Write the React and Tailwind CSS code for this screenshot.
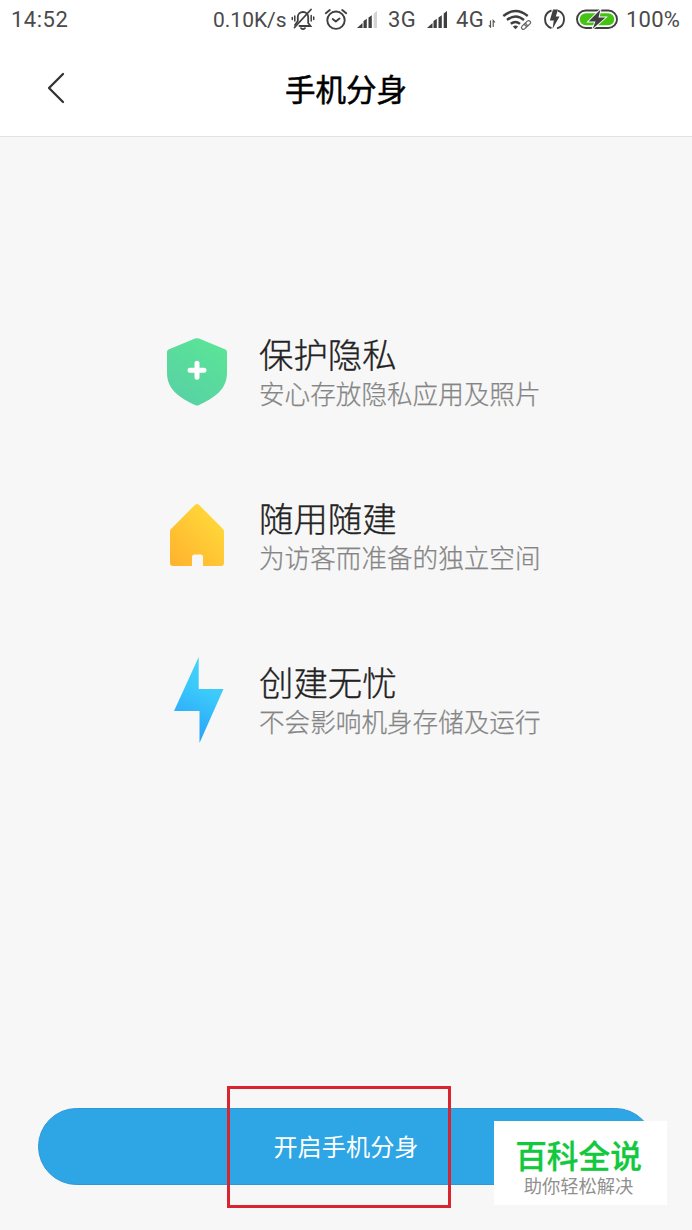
import React from "react";

const CJK = "font-['Noto_Sans_CJK_SC',sans-serif]";

function BellOff() {
  return (
    <svg className="ml-[5px] h-6 w-6 shrink-0" viewBox="0 0 24 24" fill="none" stroke="#3f3f3f" strokeWidth="1.800" strokeLinecap="round">
      <path d="M8.500 18H19.500L17.200 15V9C17.200 6.200 15 4 12 4C9 4 6.800 6.200 6.800 9V13L4 17" />
      <path d="M3.500 19.500L20 1.500M10 20.200Q12 22 14 20.200" />
      <path d="M3.800 8V13M1.300 9.500V11.500M20.200 7.500V13M22.700 9V11.500" strokeWidth="1.500" />
    </svg>
  );
}

function Alarm() {
  return (
    <svg className="ml-[9px] h-6 w-6 shrink-0" viewBox="0 0 24 24" fill="none" stroke="#3f3f3f" strokeWidth="1.900" strokeLinecap="round" strokeLinejoin="round">
      <circle cx="12" cy="12.200" r="8.700" />
      <path d="M8.700 11L11.800 13.500L15.500 10.500M1.800 5.200L5.800 2M22.200 5.200L18.200 2" />
    </svg>
  );
}

function Signal({ weak, className }) {
  return (
    <svg className={"h-5 w-[21px] shrink-0 " + className} viewBox="0 0 21 20" fill="#3f3f3f">
      <path d="M0 18L5.500 13V18Z" />
      <path d="M6.500 11L9.800 8.700V18H6.500ZM11.500 7.500L14.800 5.200V18H11.500Z" />
      <path d="M16.700 3.500L20 1V18H16.700Z" fill={weak ? "#d4d4d4" : "#3f3f3f"} />
    </svg>
  );
}

function DataArrows() {
  return (
    <svg className="mb-[12px] ml-[3px] h-[9px] w-2 shrink-0 self-end" viewBox="0 0 8 9" fill="none" stroke="#555" strokeWidth="1.200">
      <path d="M2.500 1.500V8L0.800 6.300M5.200 8V1.500L7 3.300" />
    </svg>
  );
}

function Wifi() {
  return (
    <svg className="ml-1.5 h-6 w-[30px] shrink-0" viewBox="0 0 30 24" fill="none" stroke="#3f3f3f" strokeWidth="2.400">
      <path d="M1.300 8Q13.500 -1.800 25.700 8M5 12Q13.500 5 22 12M8.800 15.800Q13.500 12 18 15.800" />
      <path d="M10.800 18.500Q13.500 16.300 16.200 18.500L13.500 21.200Z" fill="#3f3f3f" stroke="none" />
      <g transform="rotate(-43 24 17)" stroke="#666" strokeWidth="1.200">
        <rect x="18.500" y="15.100" width="6.500" height="3.800" rx="1.900" />
        <rect x="23" y="15.100" width="6.500" height="3.800" rx="1.900" />
      </g>
    </svg>
  );
}

function BoltCircle() {
  return (
    <svg className="ml-3 h-[22px] w-[21px] shrink-0" viewBox="0 0 21 22" fill="none" stroke="#3f3f3f" strokeWidth="1.900">
      <path d="M7.500 1.500A9.300 9.300 0 0 0 7.500 19.200M14 1.700A9.300 9.300 0 0 1 13 19.400" />
      <path d="M9 0.500H14L11.800 7.500H15.500L8.500 20L9.800 11.500H5.800Z" fill="#3f3f3f" stroke="none" />
    </svg>
  );
}

function Battery() {
  return (
    <svg className="ml-[11px] h-[22px] w-[42px] shrink-0" viewBox="0 0 42 22" fill="none">
      <rect x="1" y="1.500" width="40" height="17.500" rx="8.750" stroke="#3f3f3f" strokeWidth="1.900" fill="white" />
      <rect x="3.700" y="4.200" width="34.600" height="12.100" rx="6" fill="#45c313" />
      <path d="M24.500 0.500L12.500 12.500H19.500L16.500 20L29.500 8.500H22.500Z" fill="#3f3f3f" stroke="white" strokeWidth="1.800" paintOrder="stroke" />
    </svg>
  );
}

function StatusBar() {
  return (
    <div className="flex h-10 items-center pl-[11px] font-[Roboto,sans-serif] text-[22px] leading-none text-[#4a4a4a]">
      <span className="w-[202px] shrink-0 tracking-[0.500px]">14:52</span>
      <span className="w-[73px] shrink-0 whitespace-nowrap text-[21px]">0.10K/s</span>
      <BellOff />
      <Alarm />
      <Signal weak className="ml-[9px]" />
      <span className="ml-2.5 w-[29px] shrink-0 tracking-[0.400px]">3G</span>
      <Signal className="ml-2.5" />
      <span className="ml-2 w-[29px] shrink-0 tracking-[0.400px]">4G</span>
      <DataArrows />
      <Wifi />
      <BoltCircle />
      <Battery />
      <span className="ml-[8px] shrink-0 tracking-[0.200px]">100%</span>
    </div>
  );
}

function Shield() {
  return (
    <svg className="h-[68px] w-[60px]" viewBox="0 0 60 68">
      <defs>
        <linearGradient id="shield" x1="0.800" y1="0" x2="0.200" y2="1">
          <stop offset="0" stopColor="#5be596" />
          <stop offset="1" stopColor="#58d0a5" />
        </linearGradient>
      </defs>
      <path d="M28 0.600Q30 -0.300 32 0.600L58.500 11.500Q60 12.300 60 14V35C60 52 46 60.500 32 67Q30 68 28 67C14 60.500 0 52 0 35V14Q0 12.300 1.500 11.500Z" fill="url(#shield)" />
      <path d="M30 25.200V39.200M23 32.200H37" stroke="white" strokeWidth="5" strokeLinecap="round" />
    </svg>
  );
}

function House() {
  return (
    <svg className="h-[64px] w-[54px]" viewBox="0 0 54 64">
      <defs>
        <linearGradient id="house" x1="0.900" y1="0.100" x2="0.100" y2="1">
          <stop offset="0" stopColor="#ffdb3a" />
          <stop offset="1" stopColor="#ffb32e" />
        </linearGradient>
      </defs>
      <path d="M24.800 1Q27 -1 29.200 1L53 25Q54 26 54 27.500V59Q54 62 51 62H33V53Q33 50.500 30.500 50.500H24.500Q22 50.500 22 53V62H3Q0 62 0 59V27.500Q0 26 1 25Z" fill="url(#house)" />
    </svg>
  );
}

function Bolt() {
  return (
    <svg className="ml-[3px] h-[86px] w-[50px]" viewBox="0 0 50 86">
      <defs>
        <linearGradient id="bolt" x1="0.700" y1="0" x2="0.400" y2="1">
          <stop offset="0" stopColor="#46d5f8" />
          <stop offset="0.400" stopColor="#3bc9fa" />
          <stop offset="1" stopColor="#279ffb" />
        </linearGradient>
      </defs>
      <path d="M24.700 0V32H49.500L25.500 86V54H0Z" fill="url(#bolt)" />
    </svg>
  );
}

const features = [
  { Icon: Shield, title: "保护隐私", text: "安心存放隐私应用及照片" },
  { Icon: House, title: "随用随建", text: "为访客而准备的独立空间" },
  { Icon: Bolt, title: "创建无忧", text: "不会影响机身存储及运行" },
];

export default function App() {
  return (
    <div className={"relative flex h-[1230px] w-[692px] flex-col overflow-hidden bg-[#f7f7f7] " + CJK}>
      <div className="h-[137px] shrink-0 border-b border-[#e2e2e2] bg-white">
        <StatusBar />
        <header className="grid h-24 grid-cols-[160px_1fr_160px] items-center">
          <svg className="ml-[46px] h-8 w-5" viewBox="0 0 20 32" fill="none" stroke="#333" strokeWidth="2.300" strokeLinecap="round" strokeLinejoin="round">
            <path d="M17 2L3 16L17 30" />
          </svg>
          <h1 className="text-center text-[30.500px] font-normal leading-10 text-black [-webkit-text-stroke:0.500px_black]">手机分身</h1>
        </header>
      </div>

      <main className="flex flex-1 flex-col pt-[153px]">
        {features.map(({ Icon, title, text }) => (
          <section key={title} className="flex h-[164px] items-center pl-[157px]">
            <div className="flex w-20 shrink-0 justify-center">
              <Icon />
            </div>
            <div className="ml-[22px] pt-px">
              <h2 className="whitespace-nowrap text-[34.400px] font-light leading-[41px] text-[#222] [-webkit-text-stroke:0.350px_#222]">{title}</h2>
              <p className="whitespace-nowrap text-[25.600px] font-light leading-[38px] text-[#858585] [-webkit-text-stroke:0.250px_#858585]">{text}</p>
            </div>
          </section>
        ))}
      </main>

      <footer className="px-[38px] pb-[45px]">
        <button className="flex h-[77px] w-full items-center justify-center rounded-full border border-[#2b98d8] bg-[#2ea5e5] text-[24.200px] font-normal text-white">
          开启手机分身
        </button>
      </footer>

      <div className="absolute left-[227px] top-[1086px] h-[122px] w-[224px] border-[3px] border-[#d9252f]" />
      <div className="absolute left-[494px] top-[1121px] flex h-[84px] w-[173px] flex-col items-center bg-white pr-1 pt-[13px]">
        <span className="whitespace-nowrap text-[31.700px] font-medium leading-[40px] text-[#12c83c] [-webkit-text-stroke:0.300px_#12c83c]">百科全说</span>
        <span className="whitespace-nowrap text-[18.300px] leading-[22px] text-[#909090]">助你轻松解决</span>
      </div>
    </div>
  );
}
